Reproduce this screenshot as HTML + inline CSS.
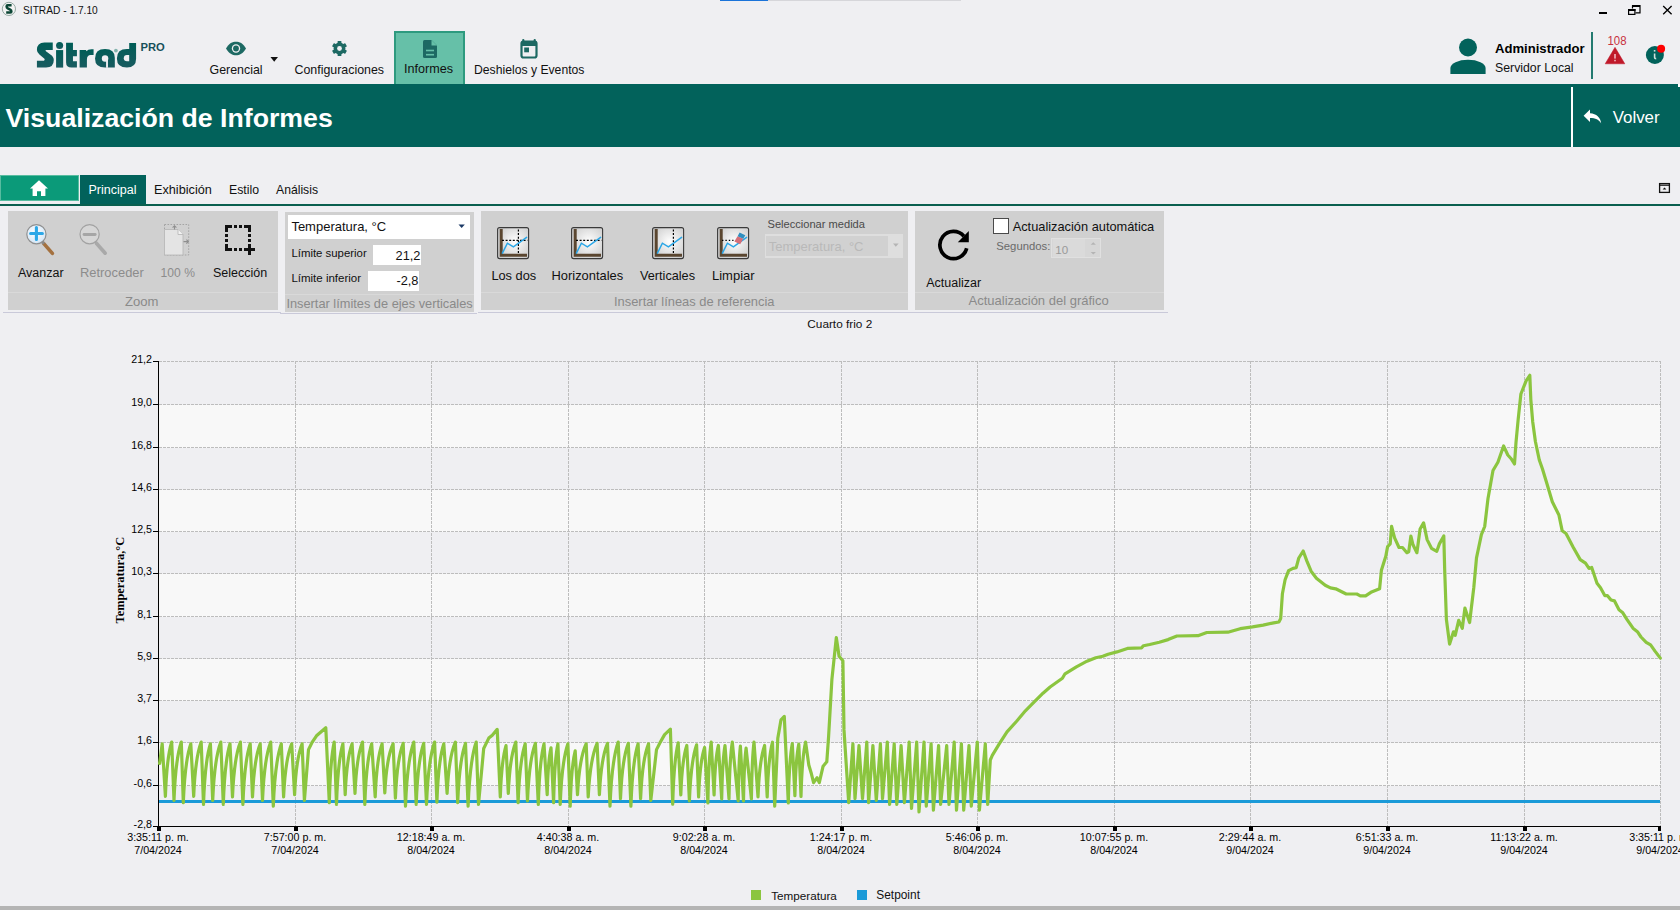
<!DOCTYPE html>
<html><head><meta charset="utf-8"><title>SITRAD</title>
<style>
html,body{margin:0;padding:0;}
body{width:1680px;height:910px;position:relative;overflow:hidden;background:#efeff2;font-family:"Liberation Sans",sans-serif;}
.t{position:absolute;white-space:nowrap;line-height:1.149;}
svg text{font-family:"Liberation Sans",sans-serif;}
.ct{font-size:10.7px;fill:#000;}
</style></head><body>
<svg style="position:absolute;left:0;top:0" width="18" height="18" viewBox="0 0 18 18"><circle cx="8.9" cy="8.9" r="6.6" fill="#f4f4f4" stroke="#93a8a2" stroke-width="1"/><path d="M11.6 5.3H7.6Q6.6 5.3 6.6 6.5Q6.6 7.6 7.8 8.3L10.2 9.6Q11.4 10.3 11.4 11.4Q11.4 12.6 10.3 12.6H6.2" fill="none" stroke="#0c4636" stroke-width="2.5" stroke-linejoin="round"/></svg>
<div class="t" style="left:23.00px;top:4.77px;font-size:10.2px;color:#111;">SITRAD - 1.7.10</div>
<svg style="position:absolute;left:1590px;top:0" width="90" height="22" viewBox="1590 0 90 22"><rect x="1599" y="12" width="8" height="2" fill="#000"/><path d="M1632.5 5.5h7.5v7.3h-4.5M1632.5 5.5v3" fill="none" stroke="#000" stroke-width="1.2"/><rect x="1632" y="5" width="8" height="2" fill="#000"/><rect x="1628.6" y="9.6" width="6.3" height="4.8" fill="none" stroke="#000" stroke-width="1.2"/><rect x="1628" y="9" width="7.5" height="2" fill="#000"/><path d="M1663.2 6l8.4 8.2M1671.6 6l-8.4 8.2" stroke="#000" stroke-width="1.3"/></svg>
<div style="position:absolute;left:720px;top:0px;width:48px;height:1px;background:#1a73d9;"></div>
<div style="position:absolute;left:768px;top:0px;width:193px;height:1px;background:#d6d6da;"></div>
<svg style="position:absolute;left:0;top:0" width="180" height="80" viewBox="0 0 180 80"><defs><linearGradient id="lgo" x1="0" y1="0" x2="0" y2="1"><stop offset="0" stop-color="#005d57"/><stop offset="1" stop-color="#195b60"/></linearGradient></defs><g fill="url(#lgo)" transform="translate(34 38) scale(0.0416667)"><path d="M450 110H250Q70 110 70 290Q70 350 130 395L250 500Q270 525 240 545H70V710H290Q475 710 475 530Q475 450 400 400L280 310Q265 295 290 285H450Z"/><circle cx="615" cy="180" r="85"/><rect x="530" y="290" width="170" height="420"/><path d="M770 115H935V290H1030V435H935V555H1030V710H900Q770 710 770 580Z"/><path d="M1095 290H1250L1258 320Q1290 270 1380 270H1430V410H1360Q1270 410 1270 520V710H1095Z"/></g><g transform="translate(94 38) scale(0.0416667)"><path fill="url(#lgo)" d="M25 490Q25 265 265 265Q500 265 500 480V710H265Q25 710 25 490Z"/><circle cx="265" cy="490" r="78" fill="#efeff2"/><rect x="290" y="490" width="45" height="225" fill="#efeff2"/><circle cx="525" cy="300" r="45" fill="#84b3ad"/><path fill="url(#lgo)" d="M845 120H1010V500Q1010 710 790 710Q550 710 550 490Q550 265 790 265H845Z"/><path fill="#efeff2" d="M845 410H790Q715 410 715 485Q715 555 790 555H845Z"/></g></svg>
<div class="t" style="left:140.50px;top:40.86px;font-size:11.2px;color:#174f5a;font-weight:bold;">PRO</div>
<div style="position:absolute;left:394px;top:31px;width:71px;height:53px;background:#66c0a8;box-sizing:border-box;border:2px solid #2e9a7f;border-bottom:none;"></div>
<svg style="position:absolute;left:224px;top:40px" width="24" height="18" viewBox="0 0 24 18"><path d="M2 8.5C5 3.2 8.5 1.8 12 1.8S19 3.2 22 8.5C19 13.8 15.5 15.2 12 15.2S5 13.8 2 8.5Z" fill="#1d6963"/><circle cx="12" cy="8.5" r="4.2" fill="#efeff2"/><circle cx="12" cy="8.5" r="2.9" fill="#1d6963"/></svg>
<svg style="position:absolute;left:269px;top:56px" width="10" height="7" viewBox="0 0 10 7"><path d="M1.5 1h7.5L5.2 5.8Z" fill="#111"/></svg>
<div class="t" style="left:209.50px;top:62.78px;font-size:12.4px;color:#111;">Gerencial</div>
<svg style="position:absolute;left:330px;top:39px" width="19" height="19" viewBox="0 0 19 19"><g transform="translate(9.5 9.5)" fill="#1d6963"><rect x="-1.9" y="-7.6" width="3.8" height="4" rx="0.5" transform="rotate(0)"/><rect x="-1.9" y="-7.6" width="3.8" height="4" rx="0.5" transform="rotate(60)"/><rect x="-1.9" y="-7.6" width="3.8" height="4" rx="0.5" transform="rotate(120)"/><rect x="-1.9" y="-7.6" width="3.8" height="4" rx="0.5" transform="rotate(180)"/><rect x="-1.9" y="-7.6" width="3.8" height="4" rx="0.5" transform="rotate(240)"/><rect x="-1.9" y="-7.6" width="3.8" height="4" rx="0.5" transform="rotate(300)"/><circle r="5.9"/></g><circle cx="9.5" cy="9.5" r="2.4" fill="#efeff2"/></svg>
<div class="t" style="left:294.50px;top:62.78px;font-size:12.4px;color:#111;">Configuraciones</div>
<svg style="position:absolute;left:421px;top:39px" width="18" height="20" viewBox="0 0 18 20"><path d="M2 2.5Q2 1 3.5 1H10.5L16 6.5V17.5Q16 19 14.5 19H3.5Q2 19 2 17.5Z" fill="#1d6963"/><path d="M10.5 1V6.5H16" fill="#66c0a8"/><path d="M10 1.2V7H15.8" fill="none" stroke="#66c0a8" stroke-width="0"/><rect x="5" y="10.7" width="8" height="1.6" fill="#66c0a8"/><rect x="5" y="14.9" width="8" height="1.6" fill="#66c0a8"/></svg>
<div class="t" style="left:404.00px;top:61.60px;font-size:12.6px;color:#111;">Informes</div>
<svg style="position:absolute;left:519px;top:38px" width="20" height="21" viewBox="0 0 20 21"><rect x="3.2" y="1" width="2.2" height="4" rx="1" fill="#1d6963"/><rect x="14.6" y="1" width="2.2" height="4" rx="1" fill="#1d6963"/><rect x="2.5" y="3.5" width="15" height="16" rx="2" fill="none" stroke="#1d6963" stroke-width="2.2"/><rect x="2.5" y="3.5" width="15" height="4.5" fill="#1d6963"/><rect x="5.2" y="9.5" width="4.8" height="4.8" fill="#1d6963"/></svg>
<div class="t" style="left:474.00px;top:62.96px;font-size:12.2px;color:#111;">Deshielos y Eventos</div>
<svg style="position:absolute;left:1448px;top:36px" width="40" height="40" viewBox="1448 36 40 40"><circle cx="1468" cy="47.5" r="9" fill="#02625b"/><path d="M1450.4 74V68A17.6 8.2 0 0 1 1485.6 68V74Z" fill="#02625b"/></svg>
<div class="t" style="left:1495.00px;top:41.14px;font-size:13.1px;color:#000;font-weight:bold;">Administrador</div>
<div class="t" style="left:1495.00px;top:60.87px;font-size:12.3px;color:#111;">Servidor Local</div>
<div style="position:absolute;left:1591px;top:32px;width:2px;height:47px;background:#237a70;"></div>
<div class="t" style="left:1607.50px;top:34.68px;font-size:11.4px;color:#c8313f;transform:scaleY(1.12);transform-origin:0 100%;">108</div>
<svg style="position:absolute;left:1603px;top:45px" width="24" height="20" viewBox="1603 45 24 20"><path d="M1615 47.3L1624.8 63.8H1605.2Z" fill="#c0192a" stroke="#c0192a" stroke-width="0.5" stroke-linejoin="round"/><rect x="1614.1" y="54" width="1.8" height="4.6" fill="#e9a5ad"/><rect x="1614.1" y="59.8" width="1.8" height="1.5" fill="#e9a5ad"/></svg>
<svg style="position:absolute;left:1644px;top:43px" width="24" height="24" viewBox="1644 43 24 24"><circle cx="1654.9" cy="55" r="9" fill="#02625b"/><rect x="1653.8" y="50" width="1.6" height="1.6" fill="#cfe0dc"/><path d="M1654.6 53.6V57.4Q1654.6 58.6 1656.2 58.6" fill="none" stroke="#cfe0dc" stroke-width="1.6"/><circle cx="1661.1" cy="48.8" r="4" fill="#fe0000"/></svg>
<div style="position:absolute;left:0px;top:84px;width:1680px;height:63px;background:#02625b;"></div>
<div class="t" style="left:5.50px;top:102.84px;font-size:26.7px;color:#fff;font-weight:bold;">Visualización de Informes</div>
<div style="position:absolute;left:1571px;top:87px;width:2px;height:60px;background:#fff;"></div>
<div style="position:absolute;left:1678px;top:84px;width:2px;height:3px;background:#fff;"></div>
<svg style="position:absolute;left:1582px;top:107px" width="22" height="18" viewBox="0 0 22 18"><path d="M1.6 8.8L8 2.5V6.3C14.5 6.6 18.5 10.5 19.2 16.5C16.8 12.6 13.5 11.2 8 11.1V15.1Z" fill="#fff"/></svg>
<div class="t" style="left:1612.70px;top:107.71px;font-size:16.9px;color:#fff;">Volver</div>
<div style="position:absolute;left:0px;top:175px;width:79px;height:26px;background:#0b9a79;box-sizing:border-box;border:1px solid #58bca0;"></div>
<svg style="position:absolute;left:29px;top:179px" width="20" height="18" viewBox="0 0 20 18"><path d="M10 1.2L1 9.6H3.6V17H8V12.2H12V17H16.4V9.6H19Z" fill="#fff"/></svg>
<div style="position:absolute;left:80px;top:175px;width:66px;height:30px;background:#02625b;"></div>
<div class="t" style="left:88.50px;top:183.19px;font-size:12.5px;color:#fff;">Principal</div>
<div class="t" style="left:154.00px;top:183.01px;font-size:12.7px;color:#111;">Exhibición</div>
<div class="t" style="left:229.00px;top:183.37px;font-size:12.3px;color:#111;">Estilo</div>
<div class="t" style="left:276.00px;top:183.46px;font-size:12.2px;color:#111;">Análisis</div>
<div style="position:absolute;left:0px;top:204px;width:1680px;height:2px;background:#0a5f4f;"></div>
<svg style="position:absolute;left:1658px;top:182px" width="13" height="12" viewBox="0 0 13 12"><rect x="1.6" y="1.6" width="9.8" height="8.8" fill="none" stroke="#111" stroke-width="1.3"/><rect x="1.6" y="2.6" width="9.8" height="1.2" fill="#111"/><path d="M4.6 7.6L6.5 5.6L8.4 7.6Z" fill="#111"/></svg>
<div style="position:absolute;left:8px;top:211px;width:270px;height:99px;background:#d0d0d0;"></div>
<div style="position:absolute;left:8px;top:292px;width:270px;height:1px;background:#d9d9d9;"></div>
<div style="position:absolute;left:285px;top:212px;width:189px;height:100px;background:#d0d0d0;"></div>
<div style="position:absolute;left:285px;top:294px;width:189px;height:1px;background:#d9d9d9;"></div>
<div style="position:absolute;left:481px;top:211px;width:427px;height:99px;background:#d0d0d0;"></div>
<div style="position:absolute;left:481px;top:292px;width:427px;height:1px;background:#d9d9d9;"></div>
<div style="position:absolute;left:915px;top:211px;width:249px;height:99px;background:#d0d0d0;"></div>
<div style="position:absolute;left:915px;top:292px;width:249px;height:1px;background:#d9d9d9;"></div>
<div style="position:absolute;left:3px;top:312px;width:278px;height:1px;background:#c9c9d9;"></div>
<div style="position:absolute;left:280px;top:313px;width:197px;height:1px;background:#c9c9d9;"></div>
<div style="position:absolute;left:478px;top:312px;width:690px;height:1px;background:#c9c9d9;"></div>
<div class="t" style="left:125.00px;top:293.74px;font-size:13.1px;color:#8a8a8a;">Zoom</div>
<div class="t" style="left:286.40px;top:296.72px;font-size:12.8px;color:#8a8a8a;">Insertar límites de ejes verticales</div>
<div class="t" style="left:614.00px;top:295.33px;font-size:12.9px;color:#8a8a8a;">Insertar líneas de referencia</div>
<div class="t" style="left:968.50px;top:294.24px;font-size:13.0px;color:#8a8a8a;">Actualización del gráfico</div>
<svg style="position:absolute;left:20px;top:218px" width="40" height="40" viewBox="20 218 40 40"><defs><radialGradient id="lg" cx="0.45" cy="0.4" r="0.65"><stop offset="0" stop-color="#ffffff"/><stop offset="1" stop-color="#cfe3f5"/></radialGradient></defs><path d="M43.6 243.4L52.4 253.4" stroke="#a4713f" stroke-width="3.6" stroke-linecap="round"/><path d="M42 241.6L44 243.8" stroke="#8a8a8a" stroke-width="3"/><circle cx="36.4" cy="234.2" r="9.6" fill="url(#lg)" stroke="#8f8f8f" stroke-width="1.2"/><path d="M30.6 233.5H42.4M36.4 227.6V239.4" stroke="#2ba7e7" stroke-width="3.1" stroke-linecap="round"/></svg>
<div class="t" style="left:18.00px;top:266.29px;font-size:12.5px;color:#111;">Avanzar</div>
<svg style="position:absolute;left:70px;top:218px" width="40" height="40" viewBox="70 218 40 40"><path d="M96.4 243.2L105.2 253.2" stroke="#a9a9a9" stroke-width="3.6" stroke-linecap="round"/><circle cx="89.6" cy="234.2" r="9.6" fill="#d6d6d6" stroke="#a2a2a2" stroke-width="1.2"/><path d="M84 234.5H95.2" stroke="#a6a6a6" stroke-width="2.8" stroke-linecap="round"/></svg>
<div class="t" style="left:80.00px;top:265.93px;font-size:12.9px;color:#8c8c8c;">Retroceder</div>
<svg style="position:absolute;left:163px;top:223px" width="28" height="34" viewBox="0 0 28 34"><path d="M1.5 1.5H25.7V32H1.5M1.5 1.5V6.5" fill="none" stroke="#a4a4a4" stroke-width="1" stroke-dasharray="1.6 1.4"/><path d="M1.5 6.5H15L20 11.5V32H1.5Z" fill="#e4e4e4" stroke="#b4b4b4" stroke-width="0.8"/><path d="M15 6.5V11.5H20" fill="#f2f2f2" stroke="#b4b4b4" stroke-width="0.8"/><path d="M11.5 2.5V6.5M9.6 4.6L11.5 2.7L13.4 4.6M20.5 18.6H25.5M23.4 16.6L25.4 18.6L23.4 20.6" stroke="#8e8e8e" stroke-width="1.1" fill="none"/></svg>
<div class="t" style="left:160.60px;top:266.65px;font-size:12.1px;color:#8c8c8c;">100 %</div>
<svg style="position:absolute;left:220px;top:220px" width="40" height="40" viewBox="220 220 40 40"><g fill="#111"><rect x="225" y="225" width="7" height="3"/><rect x="225" y="225" width="3" height="7"/><rect x="244" y="225" width="7" height="3"/><rect x="248" y="225" width="3" height="7"/><rect x="225" y="244" width="3" height="7"/><rect x="225" y="248" width="7" height="3"/><rect x="234" y="225" width="3" height="3"/><rect x="239" y="225" width="3" height="3"/><rect x="234" y="248" width="3" height="3"/><rect x="239" y="248" width="3" height="3"/><rect x="225" y="234" width="3" height="3"/><rect x="225" y="239" width="3" height="3"/><rect x="248" y="234" width="3" height="3"/><rect x="248" y="239" width="3" height="3"/><rect x="244" y="248" width="11" height="3"/><rect x="248" y="244" width="3" height="11"/></g></svg>
<div class="t" style="left:213.00px;top:266.29px;font-size:12.5px;color:#111;">Selección</div>
<div style="position:absolute;left:288px;top:215px;width:182px;height:24px;background:#fff;"></div>
<div class="t" style="left:291.40px;top:220.24px;font-size:13.0px;color:#111;">Temperatura, °C</div>
<svg style="position:absolute;left:457px;top:223px" width="9" height="7" viewBox="0 0 9 7"><path d="M1.5 1.5H7.8L4.65 5Z" fill="#1c3a66"/></svg>
<div class="t" style="left:291.40px;top:246.68px;font-size:11.4px;color:#111;">Límite superior</div>
<div style="position:absolute;left:373px;top:245px;width:48px;height:20px;background:#fff;"></div>
<div class="t" style="left:395.59px;top:248.62px;font-size:12.8px;color:#111;">21,2</div>
<div class="t" style="left:291.40px;top:272.39px;font-size:11.5px;color:#111;">Límite inferior</div>
<div style="position:absolute;left:368px;top:271px;width:51px;height:20px;background:#fff;"></div>
<div class="t" style="left:396.44px;top:274.12px;font-size:12.8px;color:#111;">-2,8</div>
<svg style="position:absolute;left:497px;top:227px" width="33" height="33" viewBox="0 0 33 33"><defs><radialGradient id="cg0" cx="0.55" cy="0.45" r="0.62"><stop offset="0" stop-color="#ffffff"/><stop offset="1" stop-color="#cdcdcd"/></radialGradient></defs><rect x="0.6" y="0.6" width="31" height="31" rx="2" fill="url(#cg0)" stroke="#3a3a3a" stroke-width="1.1"/><path d="M4.2 2V28.2H30" fill="none" stroke="#5a4630" stroke-width="3"/><path d="M5 13.3H30.5" stroke="#000" stroke-width="1.2" stroke-dasharray="2 1.6"/><path d="M21.4 2.5V26.6" stroke="#000" stroke-width="1.2" stroke-dasharray="2 1.6"/><path d="M5.4 26.2L10.4 16.2L16.4 19.8L29.6 10.4" fill="none" stroke="#2aa6e6" stroke-width="1.5" stroke-linecap="round"/></svg>
<div class="t" style="left:491.40px;top:269.32px;font-size:12.8px;color:#111;">Los dos</div>
<svg style="position:absolute;left:571px;top:227px" width="33" height="33" viewBox="0 0 33 33"><defs><radialGradient id="cg1" cx="0.55" cy="0.45" r="0.62"><stop offset="0" stop-color="#ffffff"/><stop offset="1" stop-color="#cdcdcd"/></radialGradient></defs><rect x="0.6" y="0.6" width="31" height="31" rx="2" fill="url(#cg1)" stroke="#3a3a3a" stroke-width="1.1"/><path d="M4.2 2V28.2H30" fill="none" stroke="#5a4630" stroke-width="3"/><path d="M5 13.3H30.5" stroke="#000" stroke-width="1.2" stroke-dasharray="2 1.6"/><path d="M5.4 26.2L10.4 16.2L16.4 19.8L29.6 10.4" fill="none" stroke="#2aa6e6" stroke-width="1.5" stroke-linecap="round"/></svg>
<div class="t" style="left:551.50px;top:269.23px;font-size:12.9px;color:#111;">Horizontales</div>
<svg style="position:absolute;left:652px;top:227px" width="33" height="33" viewBox="0 0 33 33"><defs><radialGradient id="cg2" cx="0.55" cy="0.45" r="0.62"><stop offset="0" stop-color="#ffffff"/><stop offset="1" stop-color="#cdcdcd"/></radialGradient></defs><rect x="0.6" y="0.6" width="31" height="31" rx="2" fill="url(#cg2)" stroke="#3a3a3a" stroke-width="1.1"/><path d="M4.2 2V28.2H30" fill="none" stroke="#5a4630" stroke-width="3"/><path d="M21.4 2.5V26.6" stroke="#000" stroke-width="1.2" stroke-dasharray="2 1.6"/><path d="M5.4 26.2L10.4 16.2L16.4 19.8L29.6 10.4" fill="none" stroke="#2aa6e6" stroke-width="1.5" stroke-linecap="round"/></svg>
<div class="t" style="left:640.00px;top:269.41px;font-size:12.7px;color:#111;">Verticales</div>
<svg style="position:absolute;left:717px;top:227px" width="33" height="33" viewBox="0 0 33 33"><defs><radialGradient id="cg3" cx="0.55" cy="0.45" r="0.62"><stop offset="0" stop-color="#ffffff"/><stop offset="1" stop-color="#cdcdcd"/></radialGradient></defs><rect x="0.6" y="0.6" width="31" height="31" rx="2" fill="url(#cg3)" stroke="#3a3a3a" stroke-width="1.1"/><path d="M4.2 2V28.2H30" fill="none" stroke="#5a4630" stroke-width="3"/><path d="M5 13.3H16.5" stroke="#000" stroke-width="1.2" stroke-dasharray="1.4 2"/><path d="M5.4 26.2L10.4 16.2L16.4 19.8L29.6 10.4" fill="none" stroke="#2aa6e6" stroke-width="1.5" stroke-linecap="round"/><path d="M17.3 14.6L20.6 9.2L26.3 11.8L23.2 17.2Z" fill="#d56f78"/><path d="M20.6 9.2L22.6 5.6L28.3 8.2L26.3 11.8Z" fill="#2f8fc0"/></svg>
<div class="t" style="left:712.00px;top:269.13px;font-size:13.0px;color:#111;">Limpiar</div>
<div class="t" style="left:767.50px;top:217.95px;font-size:11.1px;color:#4a4a4a;">Seleccionar medida</div>
<div style="position:absolute;left:765px;top:234px;width:138px;height:24px;background:#dedede;"></div>
<div style="position:absolute;left:766px;top:236px;width:122px;height:20px;background:#d1d1d1;"></div>
<div class="t" style="left:768.70px;top:239.54px;font-size:13.0px;color:#b9b9b9;">Temperatura, °C</div>
<svg style="position:absolute;left:892px;top:243px" width="8" height="6" viewBox="0 0 8 6"><path d="M1 0.6H6.6L3.8 3.8Z" fill="#b4b4b4"/></svg>
<svg style="position:absolute;left:936px;top:227px" width="36" height="36" viewBox="0 0 36 36"><path d="M27.9 9.3A13.6 13.6 0 1 0 30.7 21.3" fill="none" stroke="#000" stroke-width="3.7"/><path d="M32.8 4V15.3H21.8Z" fill="#000"/></svg>
<div class="t" style="left:926.20px;top:275.69px;font-size:12.5px;color:#111;">Actualizar</div>
<div style="position:absolute;left:993px;top:218px;width:16px;height:16px;background:#fff;box-sizing:border-box;border:1px solid #4a4a4a;"></div>
<div class="t" style="left:1012.70px;top:219.72px;font-size:12.8px;color:#111;">Actualización automática</div>
<div class="t" style="left:996.30px;top:240.27px;font-size:11.3px;color:#6a6a6a;">Segundos:</div>
<div style="position:absolute;left:1051px;top:238px;width:50px;height:20px;background:#d6d6d6;box-sizing:border-box;border:1px solid #e0e0e0;"></div>
<div style="position:absolute;left:1053px;top:239px;width:32px;height:18px;background:#dadada;"></div>
<div class="t" style="left:1055.30px;top:243.30px;font-size:11.6px;color:#999;">10</div>
<svg style="position:absolute;left:1088px;top:240px" width="10" height="16" viewBox="0 0 10 16"><path d="M2.7 4.8L5.3 2.2L7.9 4.8Z" fill="#b4b4b4"/><path d="M2.7 12L5.3 14.6L7.9 12Z" fill="#b4b4b4"/></svg>
<div class="t" style="left:807.30px;top:318.12px;font-size:11.8px;color:#111;">Cuarto frio 2</div>
<svg style="position:absolute;left:0;top:0" width="1680" height="910" viewBox="0 0 1680 910"><rect x="159" y="405" width="1501" height="43" fill="#f8f8f8"/><rect x="159" y="490" width="1501" height="42" fill="#f8f8f8"/><rect x="159" y="574" width="1501" height="43" fill="#f8f8f8"/><rect x="159" y="659" width="1501" height="42" fill="#f8f8f8"/><rect x="159" y="743" width="1501" height="43" fill="#f8f8f8"/><path d="M159 361.5H1661M159 404.5H1661M159 447.5H1661M159 489.5H1661M159 531.5H1661M159 573.5H1661M159 616.5H1661M159 658.5H1661M159 700.5H1661M159 742.5H1661M159 785.5H1661M295.5 361V826M431.5 361V826M568.5 361V826M704.5 361V826M841.5 361V826M977.5 361V826M1114.5 361V826M1250.5 361V826M1387.5 361V826M1524.5 361V826M1660.5 361V826" stroke="#bdbdbd" stroke-width="1" stroke-dasharray="3 1" shape-rendering="crispEdges"/><path d="M158.5 361V827M158 826.5H1661M153 361.5H159M153 404.5H159M153 447.5H159M153 489.5H159M153 531.5H159M153 573.5H159M153 616.5H159M153 658.5H159M153 700.5H159M153 742.5H159M153 785.5H159M153 826.5H159" stroke="#000" stroke-width="1" shape-rendering="crispEdges"/><rect x="157" y="827" width="4" height="4" fill="#000"/><rect x="294" y="827" width="4" height="4" fill="#000"/><rect x="430" y="827" width="4" height="4" fill="#000"/><rect x="567" y="827" width="4" height="4" fill="#000"/><rect x="703" y="827" width="4" height="4" fill="#000"/><rect x="840" y="827" width="4" height="4" fill="#000"/><rect x="976" y="827" width="4" height="4" fill="#000"/><rect x="1113" y="827" width="4" height="4" fill="#000"/><rect x="1249" y="827" width="4" height="4" fill="#000"/><rect x="1386" y="827" width="4" height="4" fill="#000"/><rect x="1523" y="827" width="4" height="4" fill="#000"/><rect x="1658" y="827" width="3" height="4" fill="#000"/><rect x="159" y="800" width="1501" height="3" fill="#1b9ad8"/><path d="M159.6 763.5L162.2 743.8L165.4 796.3Q166.8 757.3 171.7 742.1L174.0 800.4Q175.6 758.4 181.3 742.1L183.3 802.7Q185.0 760.3 190.8 743.8L193.7 796.3Q195.3 757.3 201.2 742.1L203.5 804.4Q205.0 760.8 210.4 743.8L212.7 800.4Q214.5 758.4 220.8 742.1L223.3 804.4Q224.8 760.8 230.0 743.8L232.5 796.9Q234.2 757.4 240.4 742.1L242.9 804.4Q244.5 760.8 250.2 743.8L252.5 796.9Q254.2 758.7 260.2 743.8L262.5 800.4Q264.3 758.4 270.7 742.1L273.3 806.2Q275.1 761.3 281.3 743.8L283.6 796.9Q285.4 758.7 291.7 743.8L294.6 794.6Q296.2 758.0 302.1 743.8L304.4 800.4L308.5 749.6L311.9 742.7L316.5 735.8L325.8 727.7L329.3 802.7Q330.4 759.1 334.2 742.1L336.5 804.4Q337.9 760.8 342.9 743.8L345.2 794.6Q346.7 758.0 352.1 743.8L355.0 793.5Q356.6 756.5 362.5 742.1L364.8 804.4Q366.3 760.8 371.7 743.8L375.2 796.9Q376.7 758.7 382.1 743.8L384.8 792.9Q386.6 757.5 393.1 743.8L395.4 798.1Q397.1 758.6 403.2 743.3L405.5 806.2Q407.3 760.0 413.8 742.1L416.2 804.4Q417.8 760.4 423.7 743.3L426.5 804.4Q428.3 759.5 434.6 742.1L436.9 802.1Q438.4 760.1 443.8 743.8L447.1 793.5Q448.9 756.5 455.4 742.1L457.7 802.7Q459.4 759.9 465.5 743.3L468.1 806.2Q469.9 760.0 476.2 742.1L478.5 804.4L483.7 748.5L488.8 738.1L492.3 735.2L497.2 729.4L500.3 796.9Q501.6 760.0 506.0 745.6L508.3 793.5Q509.9 756.5 515.8 742.1L518.1 802.7Q519.7 760.3 525.2 743.8L527.5 801.0Q529.2 759.5 535.4 743.3L538.3 804.4Q539.6 760.8 544.0 743.8L547.2 794.6Q548.0 761.0 551.0 747.9L553.6 802.7Q554.5 760.3 557.9 743.8L560.2 804.4Q561.9 760.8 567.9 743.8L570.2 806.2Q571.3 766.3 575.2 750.8L577.5 794.6Q579.4 758.0 586.2 743.8L588.2 796.9Q590.2 758.3 597.1 743.3L599.4 794.6Q601.2 757.7 607.5 743.3L610.0 806.2Q611.8 760.0 618.2 742.1L620.5 798.7Q622.2 758.8 628.3 743.3L630.9 806.2Q632.5 761.3 638.1 743.8L640.6 798.7Q642.3 759.2 648.5 743.8L650.8 800.4L656.5 749.6L660.0 742.7L664.6 734.6L670.4 729.2L672.7 804.2Q673.9 760.1 678.2 742.9L680.8 795.0Q682.1 759.4 686.8 745.5L689.4 800.9Q691.0 760.5 696.6 744.8L698.6 796.9Q699.9 761.3 704.6 747.5L707.9 802.9Q708.6 759.2 711.2 742.2L714.1 795.0Q715.0 759.4 718.4 745.5L721.7 798.9Q722.4 760.5 725.0 745.5L729.0 798.9Q729.7 758.1 732.3 742.2L738.2 800.9Q738.7 761.5 740.4 746.2L743.5 800.9Q744.1 762.9 746.1 748.1L751.4 798.9Q752.0 758.1 754.0 742.2L758.0 796.9Q759.5 759.9 764.6 745.5L767.2 796.9Q768.4 757.5 772.5 742.2L774.7 806.2L777.8 738.2L781.0 719.8L784.3 716.5L788.3 802.9Q789.2 760.1 792.3 743.5L794.9 795.6Q795.8 758.6 798.8 744.2L801.0 796.5Q802.0 757.3 805.6 742.1L808.8 765.0L811.4 773.8L813.6 782.6L817.1 777.8L819.3 782.6L823.1 766.2L826.8 761.8L828.6 736.5L831.9 679.3L836.3 637.6L839.1 656.3L842.9 660.7L844.0 729.9L848.7 802.7L852.9 743.8L855.0 798.6L859.0 745.6L862.5 798.6L866.8 742.1L868.6 802.7L872.9 745.6L876.3 800.4L880.4 743.8L882.5 798.6L887.3 742.1L889.6 804.4L894.2 743.8L896.8 804.4L901.1 745.6L904.4 802.7L909.2 742.1L911.5 808.4L916.7 742.1L919.0 811.9L924.0 742.1L926.3 806.1L931.1 743.8L933.4 810.2L938.6 745.6L940.6 804.4L946.7 745.6L949.0 804.4L954.2 742.1L956.5 810.2L961.4 743.8L963.7 810.2L969.0 745.6L971.3 806.1L977.3 742.1L979.4 810.2L985.3 743.8L987.7 804.4L990.3 760.0L992.3 755.4L999.1 744.2L1007.0 731.9L1016.6 721.3L1025.4 710.8L1032.5 703.7L1043.0 693.2L1050.1 687.0L1062.4 678.2L1065.0 673.8L1076.4 666.8L1087.0 661.2L1095.8 657.7L1102.8 656.3L1108.1 654.2L1116.9 651.9L1127.4 648.4L1141.5 647.8L1143.5 645.7L1149.7 644.5L1159.3 642.2L1168.1 639.6L1176.9 636.0L1198.0 635.7L1206.8 632.5L1227.9 632.2L1240.2 628.7L1252.5 626.9L1263.1 625.1L1273.6 622.9L1278.9 622.0L1280.7 618.5L1282.4 593.8L1285.1 579.8L1288.6 570.6L1293.0 568.4L1296.2 567.7L1298.8 558.0L1303.2 551.0L1306.7 560.6L1311.1 571.2L1316.4 578.2L1325.2 585.3L1330.4 587.9L1335.7 588.8L1342.7 592.3L1346.2 594.0L1356.8 594.0L1360.3 595.8L1365.6 595.8L1370.9 592.3L1379.6 588.8L1381.4 570.3L1385.8 556.2L1387.6 546.6L1390.2 543.9L1391.6 526.4L1394.6 537.8L1399.0 547.5L1402.5 547.5L1406.9 552.7L1408.7 551.9L1410.9 536.0L1413.0 544.8L1416.9 552.7L1420.1 529.0L1423.6 522.9L1427.1 539.6L1431.5 548.3L1436.8 551.3L1439.4 543.9L1443.8 536.0L1444.7 570.3L1446.4 619.5L1449.6 644.1L1453.5 631.8L1455.2 635.3L1458.7 620.4L1462.3 628.3L1464.9 608.1L1469.6 622.5L1473.8 587.5L1476.5 557.8L1481.4 534.7L1484.7 526.5L1488.0 498.5L1493.0 470.5L1497.9 462.2L1503.6 446.0L1507.8 455.0L1511.6 459.3L1514.5 464.0L1516.0 442.4L1518.2 419.1L1520.9 394.0L1526.1 380.9L1529.8 375.3L1530.8 399.3L1532.7 421.7L1535.4 441.5L1539.3 460.0L1542.4 468.8L1547.4 485.3L1552.3 501.8L1558.9 515.0L1562.2 530.8L1566.0 533.5L1573.2 547.3L1580.2 559.6L1585.5 563.1L1589.0 568.4L1591.7 567.5L1597.0 583.3L1600.5 587.7L1604.9 595.7L1607.5 595.7L1611.0 600.0L1614.5 600.9L1619.0 609.7L1622.5 612.4L1626.9 619.4L1633.0 628.2L1637.4 631.7L1641.0 637.0L1646.2 642.3L1650.6 644.9L1655.0 651.1L1660.3 658.1" fill="none" stroke="#8bc53f" stroke-width="3.2" stroke-linejoin="round" stroke-linecap="round"/><text transform="translate(152 362.6) scale(1 1.1)" text-anchor="end" class="ct">21,2</text><text transform="translate(152 405.6) scale(1 1.1)" text-anchor="end" class="ct">19,0</text><text transform="translate(152 448.6) scale(1 1.1)" text-anchor="end" class="ct">16,8</text><text transform="translate(152 490.6) scale(1 1.1)" text-anchor="end" class="ct">14,6</text><text transform="translate(152 532.6) scale(1 1.1)" text-anchor="end" class="ct">12,5</text><text transform="translate(152 574.6) scale(1 1.1)" text-anchor="end" class="ct">10,3</text><text transform="translate(152 617.6) scale(1 1.1)" text-anchor="end" class="ct">8,1</text><text transform="translate(152 659.6) scale(1 1.1)" text-anchor="end" class="ct">5,9</text><text transform="translate(152 701.6) scale(1 1.1)" text-anchor="end" class="ct">3,7</text><text transform="translate(152 743.6) scale(1 1.1)" text-anchor="end" class="ct">1,6</text><text transform="translate(152 786.6) scale(1 1.1)" text-anchor="end" class="ct">-0,6</text><text transform="translate(152 827.6) scale(1 1.1)" text-anchor="end" class="ct">-2,8</text><text transform="translate(158 841.2) scale(1 1.1)" text-anchor="middle" class="ct">3:35:11 p. m.</text><text transform="translate(158 853.6) scale(1 1.1)" text-anchor="middle" class="ct">7/04/2024</text><text transform="translate(295 841.2) scale(1 1.1)" text-anchor="middle" class="ct">7:57:00 p. m.</text><text transform="translate(295 853.6) scale(1 1.1)" text-anchor="middle" class="ct">7/04/2024</text><text transform="translate(431 841.2) scale(1 1.1)" text-anchor="middle" class="ct">12:18:49 a. m.</text><text transform="translate(431 853.6) scale(1 1.1)" text-anchor="middle" class="ct">8/04/2024</text><text transform="translate(568 841.2) scale(1 1.1)" text-anchor="middle" class="ct">4:40:38 a. m.</text><text transform="translate(568 853.6) scale(1 1.1)" text-anchor="middle" class="ct">8/04/2024</text><text transform="translate(704 841.2) scale(1 1.1)" text-anchor="middle" class="ct">9:02:28 a. m.</text><text transform="translate(704 853.6) scale(1 1.1)" text-anchor="middle" class="ct">8/04/2024</text><text transform="translate(841 841.2) scale(1 1.1)" text-anchor="middle" class="ct">1:24:17 p. m.</text><text transform="translate(841 853.6) scale(1 1.1)" text-anchor="middle" class="ct">8/04/2024</text><text transform="translate(977 841.2) scale(1 1.1)" text-anchor="middle" class="ct">5:46:06 p. m.</text><text transform="translate(977 853.6) scale(1 1.1)" text-anchor="middle" class="ct">8/04/2024</text><text transform="translate(1114 841.2) scale(1 1.1)" text-anchor="middle" class="ct">10:07:55 p. m.</text><text transform="translate(1114 853.6) scale(1 1.1)" text-anchor="middle" class="ct">8/04/2024</text><text transform="translate(1250 841.2) scale(1 1.1)" text-anchor="middle" class="ct">2:29:44 a. m.</text><text transform="translate(1250 853.6) scale(1 1.1)" text-anchor="middle" class="ct">9/04/2024</text><text transform="translate(1387 841.2) scale(1 1.1)" text-anchor="middle" class="ct">6:51:33 a. m.</text><text transform="translate(1387 853.6) scale(1 1.1)" text-anchor="middle" class="ct">9/04/2024</text><text transform="translate(1524 841.2) scale(1 1.1)" text-anchor="middle" class="ct">11:13:22 a. m.</text><text transform="translate(1524 853.6) scale(1 1.1)" text-anchor="middle" class="ct">9/04/2024</text><text transform="translate(1660 841.2) scale(1 1.1)" text-anchor="middle" class="ct">3:35:11 p. m.</text><text transform="translate(1660 853.6) scale(1 1.1)" text-anchor="middle" class="ct">9/04/2024</text><text transform="translate(124.3 623.5) rotate(-90)" style="font-family:Liberation Serif,serif;font-weight:bold;font-size:12.4px" fill="#000">Temperatura,°C</text><rect x="751" y="890" width="10" height="10" fill="#8bc53f"/><rect x="857" y="890" width="10" height="10" fill="#1b9ad8"/></svg>
<div class="t" style="left:771.20px;top:889.41px;font-size:11.7px;color:#111;">Temperatura</div>
<div class="t" style="left:876.30px;top:889.23px;font-size:11.9px;color:#111;">Setpoint</div>
<div style="position:absolute;left:0px;top:906px;width:1680px;height:4px;background:#b4b4b4;"></div>
</body></html>
